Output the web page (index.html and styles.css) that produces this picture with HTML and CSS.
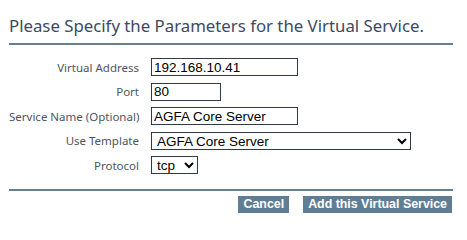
FILE: index.html
```html
<!DOCTYPE html>
<html>
<head>
<meta charset="utf-8">
<link rel="stylesheet" href="styles.css">
</head>
<body>
<div class="page">
  <h1 class="title">Please Specify the Parameters for the Virtual Service.</h1>
  <div class="form">
    <label class="lbl">Virtual Address</label>
    <div class="field"><input class="inp w-long" type="text" value="192.168.10.41"></div>
    <label class="lbl">Port</label>
    <div class="field"><input class="inp w-port" type="text" value="80"></div>
    <label class="lbl">Service Name (Optional)</label>
    <div class="field"><input class="inp w-long" type="text" value="AGFA Core Server"></div>
    <label class="lbl">Use Template</label>
    <div class="field"><select class="sel w-tpl"><option>AGFA Core Server</option></select></div>
    <label class="lbl">Protocol</label>
    <div class="field"><select class="sel w-proto"><option>tcp</option></select></div>
  </div>
  <div class="actions">
    <button class="btn">Cancel</button>
    <button class="btn">Add this Virtual Service</button>
  </div>
</div>
</body>
</html>
```
FILE: styles.css
```css
html, body {
  margin: 0;
  padding: 0;
  background: #ffffff;
}
.page {
  width: 444px;
  padding: 15px 0 0 9px;
}
.title {
  margin: 0;
  font-family: "Noto Sans", sans-serif;
  font-weight: normal;
  font-size: 16.8px;
  line-height: 22px;
  color: #3d4b5e;
  padding-bottom: 6px;
  border-bottom: 2px solid #667f91;
}
.form {
  display: grid;
  grid-template-columns: 130px auto;
  column-gap: 12px;
  row-gap: 6.5px;
  padding: 13px 0 15px;
  border-bottom: 2px solid #667f91;
  align-items: center;
}
.lbl {
  font-family: "Noto Sans", sans-serif;
  font-size: 11.5px;
  color: #4b5563;
  text-align: right;
  white-space: nowrap;
}
.field {
  display: flex;
}
.inp {
  box-sizing: border-box;
  height: 18px;
  margin: 0;
  padding: 0 2px;
  border: 1px solid #2f3b4a;
  font-family: "Liberation Sans", Arial, sans-serif;
  font-size: 13.5px;
  color: #000;
  outline: none;
}
.w-long { width: 147px; }
.w-port { width: 70px; }
.sel {
  box-sizing: border-box;
  height: 18px;
  margin: 0;
  padding: 0 0 0 1px;
  border: 1px solid #2f3b4a;
  border-radius: 0;
  background: #fff;
  font-family: "Liberation Sans", Arial, sans-serif;
  font-size: 13.5px;
  color: #000;
}
.w-tpl { width: 260px; }
.w-proto { width: 47px; }
.actions {
  display: flex;
  justify-content: flex-end;
  gap: 14px;
  padding: 5px 1px 0 0;
}
.btn {
  margin: 0;
  border: none;
  border-radius: 0;
  background: #5f7e94;
  color: #fff;
  font-family: "Liberation Sans", Arial, sans-serif;
  font-weight: bold;
  font-size: 12.4px;
  height: 17px;
  line-height: 17px;
  padding: 0 5px;
}
```
